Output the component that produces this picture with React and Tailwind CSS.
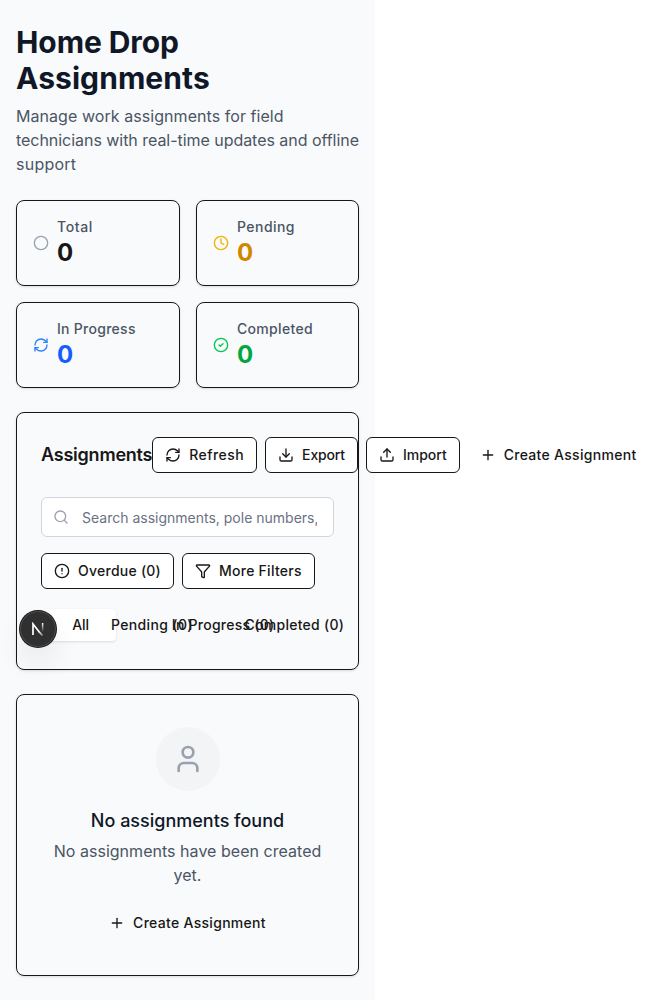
import React from "react";
import {
  Circle,
  Clock,
  RefreshCw,
  CircleCheck,
  Download,
  Upload,
  Plus,
  Search,
  CircleAlert,
  Funnel,
  User,
} from "lucide-react";

const stats = [
  { label: "Total", Icon: Circle, icon: "text-gray-400", value: "", tracking: "tracking-[0.6px]" },
  { label: "Pending", Icon: Clock, icon: "text-yellow-500", value: "text-yellow-600", tracking: "tracking-[0.45px]" },
  { label: "In Progress", Icon: RefreshCw, icon: "text-blue-500", value: "text-blue-600", tracking: "tracking-[0.28px]" },
  { label: "Completed", Icon: CircleCheck, icon: "text-green-500", value: "text-green-600", tracking: "tracking-[0.32px]" },
];

const tabs = [
  { label: "All", tracking: "" },
  { label: "Pending (0)", tracking: "tracking-[0.36px]" },
  { label: "In Progress (0)", tracking: "tracking-[0.25px]" },
  { label: "Completed (0)", tracking: "tracking-[0.26px]" },
];

function Card({ className, children }) {
  return (
    <div className={`rounded-lg border border-[#171717] shadow-sm ${className}`}>{children}</div>
  );
}

function OutlineButton({ Icon, className = "", children }) {
  return (
    <button
      className={`flex h-9 shrink-0 items-center gap-2 rounded-md border border-[#171717] bg-white px-3 text-sm font-medium whitespace-nowrap ${className}`}
    >
      <Icon className="size-4" />
      {children}
    </button>
  );
}

function CreateButton({ className }) {
  return (
    <button
      className={`inline-flex shrink-0 items-center gap-2 rounded-md text-sm font-medium tracking-[0.3px] whitespace-nowrap ${className}`}
    >
      <Plus className="size-4" />
      Create Assignment
    </button>
  );
}

function DevIndicator() {
  return (
    <div className="fixed top-[611px] left-5 flex size-9 items-center justify-center rounded-full bg-[#303030] shadow-[0_0_0_1px_#171717,inset_0_0_0_1px_rgba(255,255,255,0.14),0_16px_32px_-8px_rgba(0,0,0,0.24)]">
      <svg width="14" height="14" viewBox="0 0 14 14" fill="none">
        <defs>
          <linearGradient id="diagonal" x1="8" y1="9" x2="12" y2="14" gradientUnits="userSpaceOnUse">
            <stop stopColor="white" />
            <stop offset="1" stopColor="white" stopOpacity="0.3" />
          </linearGradient>
          <linearGradient id="stem" x1="12" y1="1" x2="12" y2="10" gradientUnits="userSpaceOnUse">
            <stop stopColor="white" />
            <stop offset="1" stopColor="white" stopOpacity="0" />
          </linearGradient>
        </defs>
        <path d="M2 13V2L8.3 10" stroke="white" strokeWidth="1.7" />
        <path d="M8 9.6L11.5 13.6" stroke="url(#diagonal)" strokeWidth="1.7" />
        <path d="M11.6 1V10.5" stroke="url(#stem)" strokeWidth="1.5" />
      </svg>
    </div>
  );
}

export default function App() {
  return (
    <div className="h-[1000px] overflow-hidden bg-white font-['Inter',sans-serif] text-[#171717]">
      <main className="flex min-h-[1000px] w-[375px] flex-col gap-6 bg-gray-50 px-4 py-6">
        <header>
          <h1 className="text-3xl font-bold text-gray-900">
            <span className="block tracking-[-0.08px]">Home Drop</span>
            <span className="block tracking-[0.08px]">Assignments</span>
          </h1>
          <p className="mt-2 whitespace-nowrap text-gray-600">
            <span className="block tracking-[0.06px]">Manage work assignments for field</span>
            <span className="block tracking-[-0.04px]">
              technicians with real-time updates and offline
            </span>
            <span className="block tracking-[0.25px]">support</span>
          </p>
        </header>

        <section className="grid grid-cols-[164px_163px] gap-4">
          {stats.map(({ label, Icon, icon, value, tracking }) => (
            <Card key={label} className="flex items-center gap-2 p-4">
              <Icon className={`size-4 ${icon}`} />
              <div>
                <p className={`text-sm font-medium text-gray-600 ${tracking}`}>{label}</p>
                <p className={`text-2xl font-bold ${value}`}>0</p>
              </div>
            </Card>
          ))}
        </section>

        <Card className="p-6">
          <div className="flex items-center justify-between">
            <h2 className="text-lg font-semibold tracking-[-0.22px]">Assignments</h2>
            <div className="flex gap-2">
              <OutlineButton Icon={RefreshCw} className="tracking-[0.44px]">
                Refresh
              </OutlineButton>
              <OutlineButton Icon={Download} className="tracking-[-0.16px]">
                Export
              </OutlineButton>
              <OutlineButton Icon={Upload}>Import</OutlineButton>
              <CreateButton className="h-9 px-3" />
            </div>
          </div>

          <div className="relative mt-6">
            <Search className="absolute top-3 left-3 size-4 text-gray-400" />
            <input
              className="block h-10 w-full rounded-md border border-gray-300 bg-white py-2 pr-4 pl-10 text-sm placeholder:text-gray-500"
              placeholder="Search assignments, pole numbers, or addresses..."
            />
          </div>

          <div className="mt-4 flex gap-2">
            <OutlineButton Icon={CircleAlert} className="tracking-[0.25px]">
              Overdue (0)
            </OutlineButton>
            <OutlineButton Icon={Funnel} className="tracking-[0.25px]">
              More Filters
            </OutlineButton>
          </div>

          <div className="mt-4 grid h-10 grid-cols-4 p-1">
            {tabs.map(({ label, tracking }, i) => (
              <button
                key={label}
                className={`flex h-8 min-w-0 items-center justify-center rounded-sm text-sm font-medium whitespace-nowrap ${tracking} ${
                  i === 0 ? "bg-white shadow-sm" : ""
                }`}
              >
                {label}
              </button>
            ))}
          </div>
        </Card>

        <Card className="p-8 text-center">
          <div className="mx-auto flex size-16 items-center justify-center rounded-full bg-gray-100">
            <User className="size-8 text-gray-400" />
          </div>
          <h3 className="mt-4 text-lg font-medium text-gray-900">No assignments found</h3>
          <p className="mt-1 tracking-[0.03px] text-gray-600">
            No assignments have been created yet.
          </p>
          <CreateButton className="mt-4 h-10 px-4 align-top" />
        </Card>
      </main>
      <DevIndicator />
    </div>
  );
}
